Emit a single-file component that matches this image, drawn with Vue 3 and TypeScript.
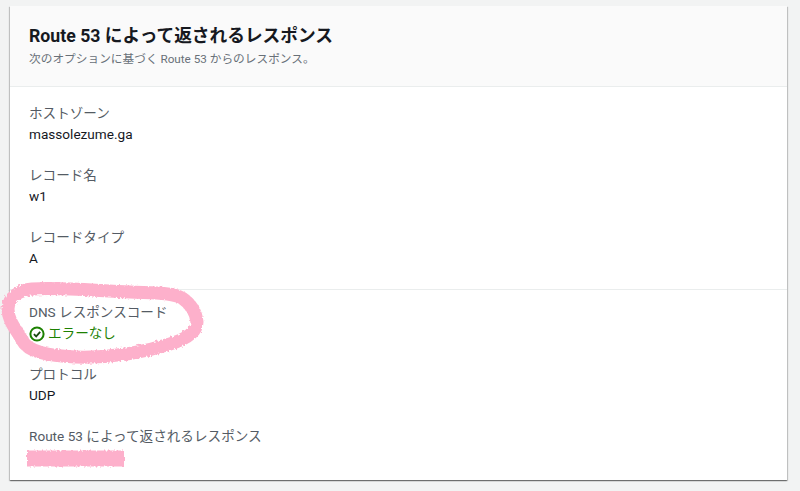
<script setup lang="ts">
interface Field { label: string; value: string }
const first: Field[] = [
  { label: 'ホストゾーン', value: 'massolezume.ga' },
  { label: 'レコード名', value: 'w1' },
  { label: 'レコードタイプ', value: 'A' },
]
</script>

<template>
  <div class="page">
    <section class="card">
      <header class="head">
        <h2 class="title">Route 53 によって返されるレスポンス</h2>
        <p class="sub">次のオプションに基づく Route 53 からのレスポンス。</p>
      </header>
      <div class="group">
        <div v-for="f in first" :key="f.label" class="field">
          <div class="label">{{ f.label }}</div>
          <div class="value">{{ f.value }}</div>
        </div>
      </div>
      <div class="group second">
        <div class="field">
          <div class="label">DNS レスポンスコード</div>
          <div class="value ok">
            <svg class="check" width="16" height="16" viewBox="0 0 16 16" fill="none">
              <circle cx="8" cy="8" r="6.6" stroke="#1d8102" stroke-width="2" />
              <path d="M4.9 8.1 7.2 10.4 11.2 5.9" stroke="#1a4a12" stroke-width="1.8" />
            </svg>
            <span>エラーなし</span>
          </div>
        </div>
        <div class="field">
          <div class="label">プロトコル</div>
          <div class="value">UDP</div>
        </div>
        <div class="field">
          <div class="label">Route 53 によって返されるレスポンス</div>
          <div class="value blank"></div>
        </div>
      </div>
    </section>
    <svg class="marker" width="800" height="491" viewBox="0 0 800 491" fill="none">
      <defs>
        <filter id="rough" x="-5%" y="-5%" width="110%" height="110%">
          <feTurbulence type="fractalNoise" baseFrequency="0.5" numOctaves="2" seed="4" />
          <feDisplacementMap in="SourceGraphic" scale="4" />
          <feGaussianBlur stdDeviation="0.6" />
        </filter>
      </defs>
      <g filter="url(#rough)" stroke="#fdb0cb" stroke-linejoin="round">
        <path
          stroke-width="13"
          stroke-linecap="round"
          d="M32 289 C60 287 100 291 130 292 C150 293 172 292 182 298 C191 304 196 313 197 322 C197 332 186 339 170 344 C145 352 110 358 75 357 C48 356 28 352 22 340 C16 329 8 321 8 309 C8 297 20 290 32 289 Z"
        />
        <path stroke-width="16" stroke-linecap="butt" d="M27 458.5 H124" />
      </g>
    </svg>
  </div>
</template>

<style scoped>
.page {
  position: relative;
  width: 800px;
  height: 491px;
  overflow: hidden;
  padding: 6px 13px 0 10px;
  box-sizing: border-box;
  background: #f2f3f3;
  font-family: Roboto, "Noto Sans CJK JP", sans-serif;
  color: #16191f;
}
.card {
  height: 474px;
  background: #fff;
  box-shadow: 0 1px 1px 0 rgba(0, 0, 0, 0.35), 1px 1px 1px 0 rgba(0, 0, 0, 0.16), -1px 1px 1px 0 rgba(0, 0, 0, 0.16);
}
.head {
  height: 81px;
  box-sizing: border-box;
  padding: 19px 19px 0;
  background: #fafafa;
  border-bottom: 1px solid #eaeded;
}
.title {
  margin: 0;
  font-size: 17.7px;
  line-height: 22px;
  font-weight: 700;
}
.sub {
  margin: 3px 0 0;
  font-size: 11.7px;
  line-height: 18px;
  color: #687078;
}
.group {
  padding: 16px 19px 0;
}
.second {
  padding-top: 12px;
  border-top: 1px solid #eaeded;
}
.field {
  height: 62px;
}
.label {
  font-size: 13.6px;
  line-height: 21px;
  color: #545b64;
}
.value {
  font-size: 13.6px;
  line-height: 21px;
}
.ok {
  display: flex;
  align-items: center;
  gap: 3px;
  color: #1d8102;
}
.check {
  flex: none;
}
.marker {
  position: absolute;
  left: 0;
  top: 0;
  pointer-events: none;
}
</style>
